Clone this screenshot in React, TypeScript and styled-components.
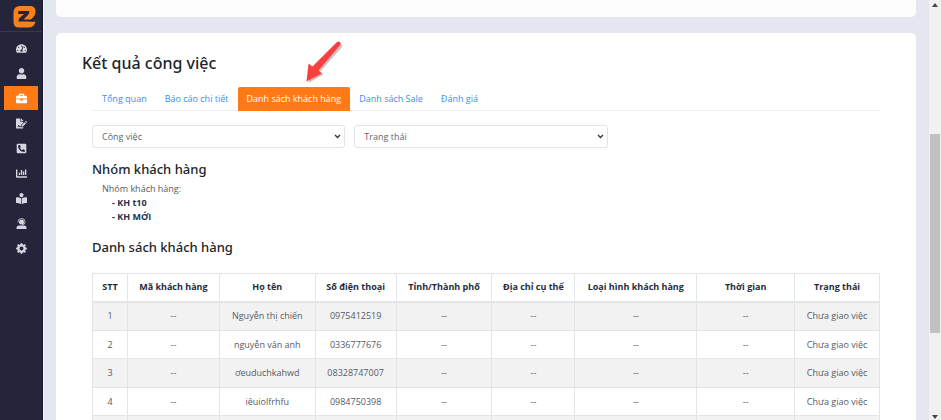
import React from "react";
import styled, { createGlobalStyle } from "styled-components";
import {
  FaTachometerAlt,
  FaUser,
  FaBriefcase,
  FaFileSignature,
  FaPhoneSquareAlt,
  FaChartBar,
  FaBookReader,
} from "react-icons/fa";
import { BsGearFill } from "react-icons/bs";

const Global = createGlobalStyle`
  * { box-sizing: border-box; }
  body {
    margin: 0;
    overflow: hidden;
    background: #e4e7ef;
    color: #555b66;
    font: 9px/14px "Open Sans", "Noto Sans", sans-serif;
  }
`;

const Page = styled.div`
  display: flex;
  height: 100vh;
  overflow: hidden;
`;

const Sidebar = styled.nav`
  flex: none;
  width: 43px;
  background: #24243a;
  border-right: 1px solid #15152c;
`;

const LogoLink = styled.a`
  display: flex;
  justify-content: center;
  height: 32px;
  padding: 6px 0 0 6px;
  border-bottom: 1px solid #38384e;
`;

const Menu = styled.ul`
  display: flex;
  flex-direction: column;
  gap: 1px;
  margin: 4px 0 0;
  padding: 0 4px;
  list-style: none;
`;

const MenuLink = styled.a<{ $active?: boolean }>`
  display: flex;
  align-items: center;
  justify-content: center;
  height: 24px;
  color: ${(p) => (p.$active ? "#fff" : "#d5d7e0")};
  background: ${(p) => (p.$active ? "#ff7a14" : "transparent")};
  font-size: 11px;
`;

const Main = styled.main`
  flex: 1;
  min-width: 0;
  padding: 0 13px 0 12px;
  border-left: 1px solid #f4f5f9;
`;

const PreviousCard = styled.section`
  height: 17px;
  margin-bottom: 16px;
  background: #fdfdfe;
  border-radius: 0 0 5px 5px;
`;

const Card = styled.section`
  min-height: 100%;
  padding: 20px 26px;
  background: #fff;
  border-radius: 5px;
`;

const Title = styled.h1`
  margin: 0;
  color: #212529;
  font-family: "Noto Sans", sans-serif;
  font-size: 16px;
  line-height: 20px;
  font-weight: 500;
`;

const Content = styled.div`
  padding: 0 10px;
`;

const Tabs = styled.div`
  display: flex;
  height: 24px;
  margin: 14px 0;
  padding-left: 1px;
  border-bottom: 1px solid #eceef0;
`;

const Tab = styled.button<{ $active?: boolean }>`
  position: relative;
  height: 24px;
  padding: 0 9px;
  border: 0;
  border-radius: 2px 2px 0 0;
  background: ${(p) => (p.$active ? "#ff7a14" : "transparent")};
  color: ${(p) => (p.$active ? "#fff" : "#3c8dfc")};
  font: inherit;
  white-space: nowrap;
`;

const Pointer = styled.svg`
  position: absolute;
  left: 62px;
  bottom: 24px;
  pointer-events: none;
`;

const Filters = styled.div`
  display: grid;
  grid-template-columns: repeat(3, 1fr);
  gap: 9px;
  padding-right: 10px;
`;

const SelectBox = styled.div`
  position: relative;
  display: grid;
  align-items: center;

  svg {
    position: absolute;
    right: 4px;
    pointer-events: none;
  }
`;

const Select = styled.select`
  appearance: none;
  height: 23px;
  padding: 0 20px 0 9px;
  border: 1px solid #dfe4e7;
  border-radius: 3px;
  background: #fff;
  color: #60666e;
  font: inherit;
`;

const Heading = styled.h2`
  margin: 11px 0 0;
  color: #212529;
  font-family: "Noto Sans", sans-serif;
  font-size: 13px;
  line-height: 20px;
  font-weight: 500;
`;

const Group = styled.div`
  padding: 3px 10px 2px;
`;

const GroupList = styled.ul`
  margin: 0;
  padding: 0 0 0 10px;
  list-style: none;
  color: #25304a;
  font-weight: 700;
`;

const Table = styled.table`
  width: 100%;
  margin-top: 16px;
  table-layout: fixed;
  border-collapse: collapse;
  text-align: center;

  th,
  td {
    padding: 0;
    border: 1px solid #e1e5e8;
    white-space: nowrap;
  }
  th {
    height: 28px;
    border-bottom-width: 2px;
    color: #1f2c3d;
    font-weight: 700;
  }
  td {
    height: 28px;
  }
  tbody tr:nth-child(odd) {
    background: #f2f2f2;
  }
  tbody tr:nth-child(odd) td {
    height: 29px;
  }
`;

const Column = styled.col<{ $share: number }>`
  width: ${(p) => p.$share}%;
`;

const ScrollTrack = styled.div`
  display: flex;
  flex: none;
  flex-direction: column;
  align-items: center;
  width: 12px;
  padding: 3px 0 1px;
  background: #f1f1f1;
`;

const Spacer = styled.div<{ $grow: number }>`
  flex: ${(p) => p.$grow};
`;

const Thumb = styled.div`
  flex: 199;
  width: 10px;
  background: #c1c1c1;
`;

function AgentIcon() {
  return (
    <svg width="11" height="11" viewBox="0 0 22 22" fill="currentColor" aria-hidden="true">
      <path d="M1 22V20Q1 15 6 15H16Q21 15 21 20V22Z" />
      <circle cx="11" cy="8" r="5" />
      <path d="M4 9V7.500A7 6.500 0 0 1 18 7.500V9Q18 13 12 13.500" fill="none" stroke="currentColor" strokeWidth="1.600" />
    </svg>
  );
}

const menu = [
  { label: "Tổng quan", Icon: FaTachometerAlt },
  { label: "Khách hàng", Icon: FaUser },
  { label: "Công việc", Icon: FaBriefcase, active: true },
  { label: "Hợp đồng", Icon: FaFileSignature },
  { label: "Cuộc gọi", Icon: FaPhoneSquareAlt },
  { label: "Báo cáo", Icon: FaChartBar },
  { label: "Hướng dẫn", Icon: FaBookReader },
  { label: "Hỗ trợ", Icon: AgentIcon },
  { label: "Cài đặt", Icon: BsGearFill },
];

const tabs = ["Tổng quan", "Báo cáo chi tiết", "Danh sách khách hàng", "Danh sách Sale", "Đánh giá"];
const activeTab = 2;

const columns = [
  { title: "STT", share: 35 },
  { title: "Mã khách hàng", share: 92 },
  { title: "Họ tên", share: 96 },
  { title: "Số điện thoại", share: 81 },
  { title: "Tỉnh/Thành phố", share: 96 },
  { title: "Địa chỉ cụ thể", share: 83 },
  { title: "Loại hình khách hàng", share: 122 },
  { title: "Thời gian", share: 98 },
  { title: "Trạng thái", share: 85 },
];
const totalShare = columns.reduce((sum, c) => sum + c.share, 0);

const customers = [
  ["Nguyễn thị chiến", "0975412519"],
  ["nguyễn vân anh", "0336777676"],
  ["ơeuduchkahwd", "08328747007"],
  ["iêuiolfrhfu", "0984750398"],
];

function Logo() {
  return (
    <svg width="23" height="23" viewBox="0 0 23 23" aria-hidden="true">
      <path
        d="M7 0H17Q22.500 0 22.500 5.500Q22.500 9 20 11.500L16 15.500H22.500Q21.500 21.500 15.500 21.500H6Q0.500 21.500 0.500 16V7Q0.500 0 7 0Z"
        fill="#f58220"
      />
      <path d="M5.500 5H16.500L15.500 8.500L10.500 13.500H22.500V15.500H5.500L6 12.500L11 8H5Z" fill="#24243a" />
    </svg>
  );
}

function Filter({ label }: { label: string }) {
  return (
    <SelectBox>
      <Select aria-label={label}>
        <option>{label}</option>
      </Select>
      <svg width="7" height="5" viewBox="0 0 7 5" aria-hidden="true">
        <path d="M1 1L3.500 3.500L6 1" fill="none" stroke="#343a40" strokeWidth="1.400" />
      </svg>
    </SelectBox>
  );
}

export default function App() {
  return (
    <Page>
      <Global />
      <Sidebar aria-label="Menu">
        <LogoLink href="#" aria-label="Trang chủ">
          <Logo />
        </LogoLink>
        <Menu>
          {menu.map(({ label, Icon, active }) => (
            <li key={label}>
              <MenuLink href="#" aria-label={label} $active={active}>
                <Icon />
              </MenuLink>
            </li>
          ))}
        </Menu>
      </Sidebar>
      <Main>
        <PreviousCard />
        <Card>
          <Title>Kết quả công việc</Title>
          <Content>
            <Tabs role="tablist">
              {tabs.map((name, i) => (
                <Tab key={name} role="tab" aria-selected={i === activeTab} $active={i === activeTab}>
                  {name}
                  {i === activeTab && (
                    <Pointer width="46" height="48" viewBox="0 0 46 48" aria-hidden="true">
                      <path
                        d="M38.500 5Q42 4.500 42.500 7.500L20 33L23.500 35.500L8.500 44L11 29L15 30Z"
                        fill="#555"
                        opacity="0.350"
                      />
                      <path d="M36.500 3.500Q39.500 1 41 5L18.500 31.500L22 34.500L6.500 42.500L8.500 24.500L12.500 27.500Z" fill="#f8403f" />
                    </Pointer>
                  )}
                </Tab>
              ))}
            </Tabs>
            <Filters>
              <Filter label="Công việc" />
              <Filter label="Trạng thái" />
            </Filters>
            <Heading>Nhóm khách hàng</Heading>
            <Group>
              Nhóm khách hàng:
              <GroupList>
                <li>- KH t10</li>
                <li>- KH MỚI</li>
              </GroupList>
            </Group>
            <Heading>Danh sách khách hàng</Heading>
            <Table>
              <colgroup>
                {columns.map((c) => (
                  <Column key={c.title} $share={(c.share / totalShare) * 100} />
                ))}
              </colgroup>
              <thead>
                <tr>
                  {columns.map((c) => (
                    <th key={c.title} scope="col">{c.title}</th>
                  ))}
                </tr>
              </thead>
              <tbody>
                {customers.map(([name, phone], i) => (
                  <tr key={phone}>
                    <td>{i + 1}</td>
                    <td>--</td>
                    <td>{name}</td>
                    <td>{phone}</td>
                    <td>--</td>
                    <td>--</td>
                    <td>--</td>
                    <td>--</td>
                    <td>Chưa giao việc</td>
                  </tr>
                ))}
                <tr>
                  {columns.map((c) => (
                    <td key={c.title} />
                  ))}
                </tr>
              </tbody>
            </Table>
          </Content>
        </Card>
      </Main>
      <ScrollTrack aria-hidden="true">
        <svg width="6" height="4" viewBox="0 0 6 4"><path d="M0 4L3 0L6 4Z" fill="#444" /></svg>
        <Spacer $grow={127} />
        <Thumb />
        <Spacer $grow={82} />
        <svg width="6" height="4" viewBox="0 0 6 4"><path d="M0 0L3 4L6 0Z" fill="#444" /></svg>
      </ScrollTrack>
    </Page>
  );
}
